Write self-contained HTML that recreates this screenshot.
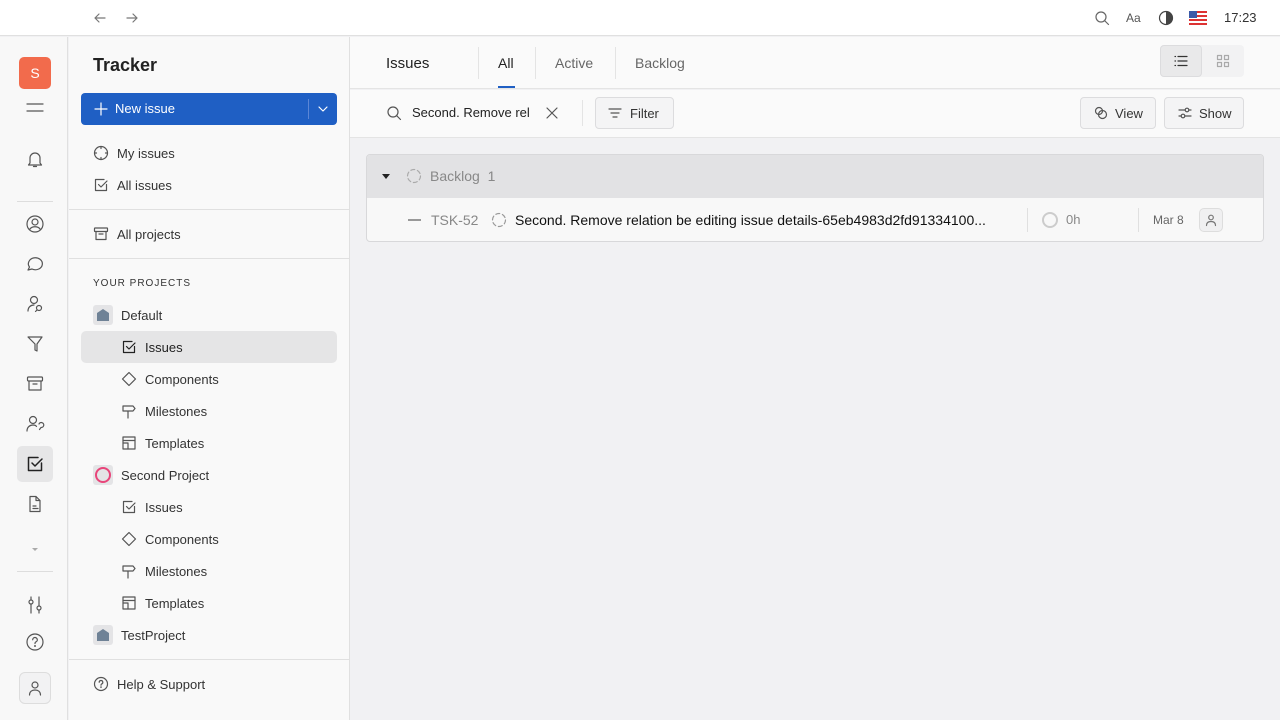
<!DOCTYPE html>
<html><head><meta charset="utf-8">
<style>
*{box-sizing:border-box;margin:0;padding:0}
body{width:1280px;height:720px;overflow:hidden;font-family:"Liberation Sans",sans-serif;background:#f1f1f3;position:relative;color:#333}
.a{position:absolute}
svg{position:absolute;fill:none;stroke:#555;stroke-width:1.2;stroke-linecap:round;stroke-linejoin:round}
.t{position:absolute;font-size:13px;color:#333;white-space:nowrap}
.btn{position:absolute;border:1px solid #dcdcde;border-radius:4px;background:#f4f4f5}
</style></head><body>
<!-- top bar -->
<div class="a" style="left:0;top:0;width:1280px;height:36px;background:#fff;border-bottom:1px solid #e0e0e0"></div>
<svg style="left:92px;top:10px" width="16" height="16" viewBox="0 0 16 16"><path d="M13 8H3M7 4L3 8l4 4" stroke="#777"/></svg>
<svg style="left:124px;top:10px" width="16" height="16" viewBox="0 0 16 16"><path d="M3 8h10M9 4l4 4-4 4" stroke="#777"/></svg>
<svg style="left:1094px;top:10px" width="16" height="16" viewBox="0 0 16 16"><circle cx="7" cy="7" r="5" stroke="#666"/><path d="M11 11l3.5 3.5" stroke="#666"/></svg>
<div class="t" style="left:1126px;top:11px;font-size:12px;color:#555">Aa</div>
<svg style="left:1158px;top:10px" width="16" height="16" viewBox="0 0 16 16"><circle cx="8" cy="8" r="6.5" stroke="#444"/><path d="M8 1.5a6.5 6.5 0 0 1 0 13z" fill="#444" stroke="none"/></svg>
<div class="a" style="left:1189px;top:11px;width:18px;height:14px;background:repeating-linear-gradient(#d33 0 2px,#fff 2px 4px)"><div class="a" style="left:0;top:0;width:8px;height:7px;background:#3b5aa8"></div></div>
<div class="t" style="left:1224px;top:10px;font-size:13px;color:#333">17:23</div>

<!-- rail -->
<div class="a" style="left:0;top:37px;width:68px;height:683px;background:#f8f8f8;border-right:1px solid #e0e0e0"></div>
<div class="a" style="left:19px;top:57px;width:32px;height:32px;border-radius:5px;background:#f26b4c;color:#fff;font-size:14px;text-align:center;line-height:32px">S</div>
<svg style="left:26px;top:100px" width="18" height="16" viewBox="0 0 18 16"><path d="M1 4h16M1 11h16"/></svg>
<svg style="left:25px;top:149px" width="20" height="20" viewBox="0 0 20 20"><path d="M5 14V9a5 5 0 0 1 10 0v5l1.5 2h-13zM8.5 17.5h3"/></svg>
<div class="a" style="left:17px;top:201px;width:36px;height:1px;background:#ddd"></div>
<svg style="left:25px;top:214px" width="20" height="20" viewBox="0 0 20 20"><circle cx="10" cy="10" r="8"/><circle cx="10" cy="8" r="3"/><path d="M5 15c2-3 8-3 10 0"/></svg>
<svg style="left:25px;top:254px" width="20" height="20" viewBox="0 0 20 20"><path d="M3 16l1.5-3A7 6 0 1 1 7 15z"/></svg>
<svg style="left:25px;top:294px" width="20" height="20" viewBox="0 0 20 20"><circle cx="9" cy="6" r="3.5"/><path d="M3 17c0-4 3-6 6-6"/><circle cx="14" cy="14" r="2.5"/><path d="M12 16l-1.5 1.5"/></svg>
<svg style="left:25px;top:334px" width="20" height="20" viewBox="0 0 20 20"><path d="M3 3h14l-5 7v7l-2-1v-6z"/></svg>
<svg style="left:25px;top:374px" width="20" height="20" viewBox="0 0 20 20"><rect x="2.5" y="3" width="15" height="4" rx="1"/><path d="M4 7v9h12V7M8 10h4"/></svg>
<svg style="left:25px;top:414px" width="20" height="20" viewBox="0 0 20 20"><circle cx="8" cy="6" r="3.5"/><path d="M2 17c0-4 3-6 6-6s3 1 3.5 1.5"/><path d="M14 10a2.5 2.5 0 1 1 2 3.5l-1.5 2"/></svg>
<div class="a" style="left:17px;top:446px;width:36px;height:36px;border-radius:5px;background:#e6e6e7"></div>
<svg style="left:25px;top:454px" width="20" height="20" viewBox="0 0 20 20"><path d="M16.5 9v7.5h-13v-13H13" stroke="#222" stroke-width="1.5"/><path d="M7 9l3 3 7-7" stroke="#222" stroke-width="1.5"/></svg>
<svg style="left:25px;top:494px" width="20" height="20" viewBox="0 0 20 20"><path d="M5 2.5h6l4 4v11H5zM11 2.5v4h4M8 12h3M8 14.5h5"/></svg>
<div class="a" style="left:32px;top:548px;border:3px solid transparent;border-top:3px solid #aaa"></div>
<div class="a" style="left:17px;top:571px;width:36px;height:1px;background:#ddd"></div>
<svg style="left:25px;top:595px" width="20" height="20" viewBox="0 0 20 20"><path d="M6 2v16M14 2v16"/><circle cx="6" cy="7" r="2" fill="#f8f8f8"/><circle cx="14" cy="13" r="2" fill="#f8f8f8"/></svg>
<svg style="left:25px;top:632px" width="20" height="20" viewBox="0 0 20 20"><circle cx="10" cy="10" r="8"/><path d="M7.7 7.8a2.3 2.3 0 1 1 3 2.2c-.6.3-.7.8-.7 1.5"/><circle cx="10" cy="14" r=".4"/></svg>
<div class="a" style="left:19px;top:672px;width:32px;height:32px;border-radius:6px;border:1px solid #ddd;background:#f2f2f3"></div>
<svg style="left:26px;top:679px" width="18" height="18" viewBox="0 0 18 18"><circle cx="9" cy="6" r="3"/><path d="M3.5 16c0-3.5 2.5-5 5.5-5s5.5 1.5 5.5 5"/></svg>

<!-- sidebar -->
<div class="a" style="left:69px;top:37px;width:281px;height:683px;background:#f9f9f9;border-right:1px solid #e0e0e0"></div>
<div class="t" style="left:93px;top:55px;font-size:18px;font-weight:bold;color:#222">Tracker</div>
<div class="a" style="left:81px;top:93px;width:256px;height:32px;border-radius:4px;background:#1f5fc4"></div>
<svg style="left:93px;top:101px" width="16" height="16" viewBox="0 0 16 16"><path d="M8 2v12M2 8h12" stroke="#fff"/></svg>
<div class="t" style="left:115px;top:101px;color:#fff">New issue</div>
<div class="a" style="left:308px;top:99px;width:1px;height:20px;background:#5b86d6"></div>
<svg style="left:316px;top:102px" width="14" height="14" viewBox="0 0 14 14"><path d="M3 5l4 4 4-4" stroke="#fff"/></svg>
<svg style="left:93px;top:145px" width="16" height="16" viewBox="0 0 16 16"><circle cx="8" cy="8" r="6.5"/><path d="M8 1.5v2M8 12.5v2M1.5 8h2M12.5 8h2"/></svg>
<div class="t" style="left:117px;top:146px">My issues</div>
<svg style="left:93px;top:177px" width="16" height="16" viewBox="0 0 16 16"><path d="M13.5 7.5v6h-11v-11H11"/><path d="M5.5 7.5l2.5 2.5 6-6"/></svg>
<div class="t" style="left:117px;top:178px">All issues</div>
<div class="a" style="left:69px;top:209px;width:280px;height:1px;background:#e0e0e0"></div>
<svg style="left:93px;top:226px" width="16" height="16" viewBox="0 0 16 16"><rect x="1.5" y="2" width="13" height="3.5" rx=".5"/><path d="M3 5.5v8h10v-8M6 8h4"/></svg>
<div class="t" style="left:117px;top:227px">All projects</div>
<div class="a" style="left:69px;top:258px;width:280px;height:1px;background:#e0e0e0"></div>
<div class="t" style="left:93px;top:278px;font-size:10px;letter-spacing:1px;color:#333">YOUR PROJECTS</div>

<div class="a" style="left:93px;top:305px;width:20px;height:20px;border-radius:3px;background:#e4e4e6"></div>
<svg style="left:96px;top:308px" width="14" height="14" viewBox="0 0 14 14"><path d="M1 5l6-4 6 4v8H1z" fill="#6f8296" stroke="none"/></svg>
<div class="t" style="left:121px;top:308px">Default</div>
<div class="a" style="left:81px;top:331px;width:256px;height:32px;border-radius:5px;background:#e5e5e6"></div>

<div class="a" style="left:93px;top:465px;width:20px;height:20px;border-radius:3px;background:#e4e4e6"></div>
<div class="a" style="left:95px;top:467px;width:16px;height:16px;border-radius:50%;border:2px solid #e8457a"></div>
<div class="t" style="left:121px;top:468px">Second Project</div>
<div class="a" style="left:93px;top:625px;width:20px;height:20px;border-radius:3px;background:#e4e4e6"></div>
<svg style="left:96px;top:628px" width="14" height="14" viewBox="0 0 14 14"><path d="M1 5l6-4 6 4v8H1z" fill="#6f8296" stroke="none"/></svg>
<div class="t" style="left:121px;top:628px">TestProject</div>

<!-- sub items group 1 -->
<svg style="left:121px;top:339px" width="16" height="16" viewBox="0 0 16 16"><path d="M13.5 7.5v6h-11v-11H11" stroke="#222"/><path d="M5.5 7.5l2.5 2.5 6-6" stroke="#222"/></svg>
<div class="t" style="left:145px;top:340px;color:#222">Issues</div>
<svg style="left:121px;top:371px" width="16" height="16" viewBox="0 0 16 16"><path d="M8 1.5L14.5 8 8 14.5 1.5 8z"/></svg>
<div class="t" style="left:145px;top:372px">Components</div>
<svg style="left:121px;top:403px" width="16" height="16" viewBox="0 0 16 16"><path d="M2 3h10l2 2.5-2 2.5H2zM7 8v7"/></svg>
<div class="t" style="left:145px;top:404px">Milestones</div>
<svg style="left:121px;top:435px" width="16" height="16" viewBox="0 0 16 16"><rect x="2" y="2" width="12" height="12"/><path d="M2 5.5h12M7 8v6M2 8h5"/></svg>
<div class="t" style="left:145px;top:436px">Templates</div>
<!-- group 2 -->
<svg style="left:121px;top:499px" width="16" height="16" viewBox="0 0 16 16"><path d="M13.5 7.5v6h-11v-11H11"/><path d="M5.5 7.5l2.5 2.5 6-6"/></svg>
<div class="t" style="left:145px;top:500px">Issues</div>
<svg style="left:121px;top:531px" width="16" height="16" viewBox="0 0 16 16"><path d="M8 1.5L14.5 8 8 14.5 1.5 8z"/></svg>
<div class="t" style="left:145px;top:532px">Components</div>
<svg style="left:121px;top:563px" width="16" height="16" viewBox="0 0 16 16"><path d="M2 3h10l2 2.5-2 2.5H2zM7 8v7"/></svg>
<div class="t" style="left:145px;top:564px">Milestones</div>
<svg style="left:121px;top:595px" width="16" height="16" viewBox="0 0 16 16"><rect x="2" y="2" width="12" height="12"/><path d="M2 5.5h12M7 8v6M2 8h5"/></svg>
<div class="t" style="left:145px;top:596px">Templates</div>
<div class="a" style="left:69px;top:659px;width:280px;height:1px;background:#e0e0e0"></div>
<svg style="left:93px;top:676px" width="16" height="16" viewBox="0 0 16 16"><circle cx="8" cy="8" r="6.5"/><path d="M6.2 6.3a1.8 1.8 0 1 1 2.4 1.7c-.5.2-.6.6-.6 1.2"/><circle cx="8" cy="11.2" r=".3"/></svg>
<div class="t" style="left:117px;top:677px">Help &amp; Support</div>

<!-- main header -->
<div class="a" style="left:350px;top:37px;width:930px;height:52px;background:#fafafa;border-bottom:1px solid #e4e4e4"></div>
<div class="t" style="left:386px;top:55px;font-size:15px;color:#222">Issues</div>
<div class="a" style="left:478px;top:47px;width:1px;height:32px;background:#e4e4e4"></div>
<div class="t" style="left:498px;top:55px;font-size:14px;color:#222">All</div>
<div class="a" style="left:498px;top:86px;width:17px;height:2px;background:#1f5fc4"></div>
<div class="a" style="left:535px;top:47px;width:1px;height:32px;background:#e4e4e4"></div>
<div class="t" style="left:555px;top:55px;font-size:14px;color:#666">Active</div>
<div class="a" style="left:615px;top:47px;width:1px;height:32px;background:#e4e4e4"></div>
<div class="t" style="left:635px;top:55px;font-size:14px;color:#666">Backlog</div>
<div class="a" style="left:1160px;top:45px;width:84px;height:32px;border-radius:4px;background:#f2f2f3"></div>
<div class="btn" style="left:1160px;top:45px;width:42px;height:32px;background:#e9e9ea"></div>
<svg style="left:1173px;top:53px" width="16" height="16" viewBox="0 0 16 16"><path d="M5 3.5h9M5 8h9M5 12.5h9M2 3.5h.5M2 8h.5M2 12.5h.5" stroke="#333"/></svg>
<svg style="left:1215px;top:53px" width="16" height="16" viewBox="0 0 16 16"><rect x="2.5" y="2.5" width="4" height="4" stroke="#aaa"/><rect x="9.5" y="2.5" width="4" height="4" stroke="#aaa"/><rect x="2.5" y="9.5" width="4" height="4" stroke="#aaa"/><rect x="9.5" y="9.5" width="4" height="4" stroke="#aaa"/></svg>

<!-- toolbar -->
<div class="a" style="left:350px;top:90px;width:930px;height:48px;background:#fafafa;border-bottom:1px solid #e4e4e4"></div>
<svg style="left:386px;top:105px" width="16" height="16" viewBox="0 0 16 16"><circle cx="7" cy="7" r="5"/><path d="M11 11l3.5 3.5"/></svg>
<div class="t" style="left:412px;top:105px;width:117px;overflow:hidden;color:#222">Second. Remove relation</div>
<svg style="left:544px;top:105px" width="16" height="16" viewBox="0 0 16 16"><path d="M3 3l10 10M13 3L3 13"/></svg>
<div class="a" style="left:582px;top:100px;width:1px;height:26px;background:#e4e4e4"></div>
<div class="btn" style="left:595px;top:97px;width:79px;height:32px"></div>
<svg style="left:607px;top:105px" width="16" height="16" viewBox="0 0 16 16"><path d="M2 4h12M4 8h8M6 12h4"/></svg>
<div class="t" style="left:630px;top:106px">Filter</div>
<div class="btn" style="left:1080px;top:97px;width:76px;height:32px"></div>
<svg style="left:1093px;top:105px" width="16" height="16" viewBox="0 0 16 16"><circle cx="6" cy="6" r="3.5"/><circle cx="9.5" cy="9.5" r="4"/></svg>
<div class="t" style="left:1115px;top:106px">View</div>
<div class="btn" style="left:1164px;top:97px;width:80px;height:32px"></div>
<svg style="left:1177px;top:105px" width="16" height="16" viewBox="0 0 16 16"><path d="M2 5h12M2 11h12"/><circle cx="10" cy="5" r="1.8" fill="#f4f4f5"/><circle cx="6" cy="11" r="1.8" fill="#f4f4f5"/></svg>
<div class="t" style="left:1199px;top:106px">Show</div>

<!-- list -->
<div class="a" style="left:366px;top:154px;width:898px;height:88px;border:1px solid #d8d8da;border-radius:4px;background:#f8f8f8;overflow:hidden">
 <div class="a" style="left:0;top:0;width:898px;height:43px;background:#e2e2e4"></div>
</div>
<div class="a" style="left:382px;top:174px;border:4px solid transparent;border-top:5px solid #222;border-bottom:0"></div>
<svg style="left:406px;top:168px" width="16" height="16" viewBox="0 0 16 16"><circle cx="8" cy="8" r="6.5" stroke="#aaa" stroke-dasharray="4 2.8"/></svg>
<div class="t" style="left:430px;top:168px;font-size:14px;color:#888">Backlog&nbsp;&nbsp;1</div>
<div class="a" style="left:408px;top:219px;width:13px;height:1.5px;background:#999"></div>
<div class="t" style="left:431px;top:212px;font-size:14px;color:#888">TSK-52</div>
<svg style="left:491px;top:212px" width="16" height="16" viewBox="0 0 16 16"><circle cx="8" cy="8" r="6.5" stroke="#999" stroke-dasharray="4 2.8"/></svg>
<div class="t" style="left:515px;top:212px;font-size:14px;color:#111">Second. Remove relation be editing issue details-65eb4983d2fd91334100...</div>
<div class="a" style="left:1027px;top:208px;width:1px;height:24px;background:#e0e0e0"></div>
<div class="a" style="left:1042px;top:212px;width:16px;height:16px;border-radius:50%;border:2px solid #ccc"></div>
<div class="t" style="left:1066px;top:212px;font-size:13px;color:#888">0h</div>
<div class="a" style="left:1138px;top:208px;width:1px;height:24px;background:#e0e0e0"></div>
<div class="t" style="left:1153px;top:213px;font-size:12px;color:#666">Mar 8</div>
<div class="a" style="left:1199px;top:208px;width:24px;height:24px;border-radius:5px;border:1px solid #ddd;background:#f0f0f1"></div>
<svg style="left:1204px;top:213px" width="14" height="14" viewBox="0 0 14 14"><circle cx="7" cy="4.5" r="2.3" stroke="#777"/><path d="M2.5 12.5c0-3 2-4 4.5-4s4.5 1 4.5 4" stroke="#777"/></svg>
</body></html>
